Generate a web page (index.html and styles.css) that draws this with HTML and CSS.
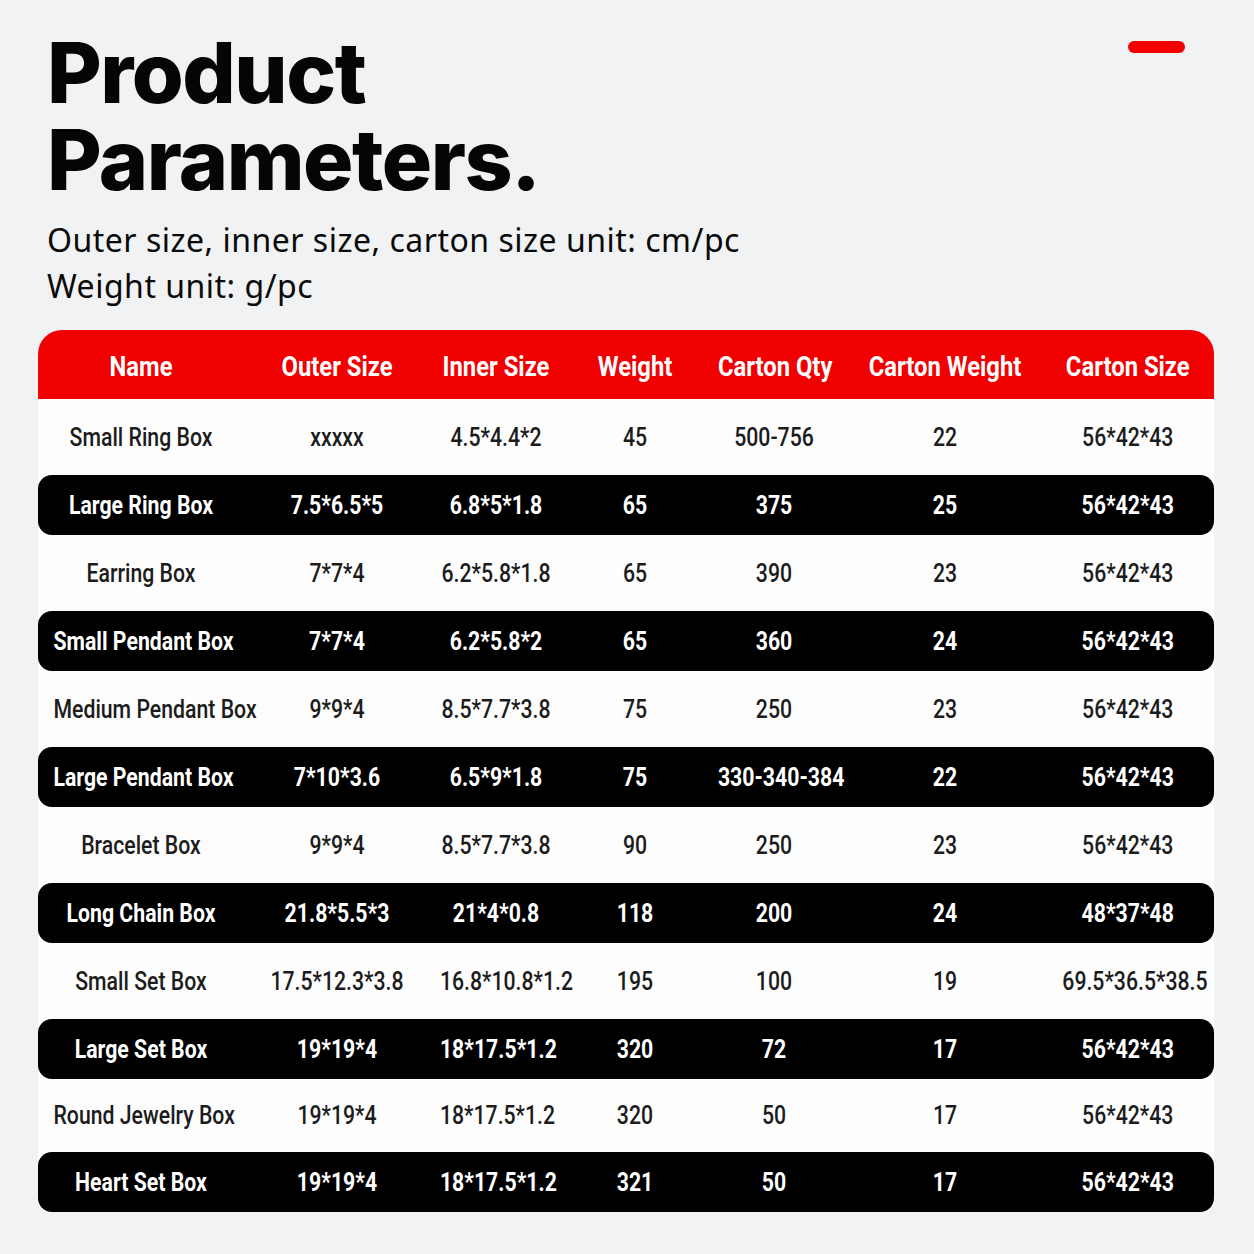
FILE: index.html
```html
<!DOCTYPE html>
<html lang="en">
<head>
<meta charset="utf-8">
<title>Product Parameters</title>
<link rel="stylesheet" href="styles.css">
</head>
<body>
<div class="page">
  <header class="intro">
    <div class="title-row">
      <h1 class="title">Product<br>Parameters.</h1>
      <span class="pill"></span>
    </div>
    <p class="sub">Outer size, inner size, carton size unit: cm/pc<br>Weight unit: g/pc</p>
  </header>

  <section class="table">
    <div class="row head">
      <span>Name</span><span>Outer Size</span><span>Inner Size</span><span>Weight</span><span>Carton Qty</span><span>Carton Weight</span><span>Carton Size</span>
    </div>
    <div class="row light">
      <span>Small Ring Box</span><span>xxxxx</span><span>4.5*4.4*2</span><span>45</span><span>500-756</span><span>22</span><span>56*42*43</span>
    </div>
    <div class="row dark">
      <span>Large Ring Box</span><span>7.5*6.5*5</span><span>6.8*5*1.8</span><span>65</span><span>375</span><span>25</span><span>56*42*43</span>
    </div>
    <div class="row light">
      <span>Earring Box</span><span>7*7*4</span><span>6.2*5.8*1.8</span><span>65</span><span>390</span><span>23</span><span>56*42*43</span>
    </div>
    <div class="row dark">
      <span>Small Pendant Box</span><span>7*7*4</span><span>6.2*5.8*2</span><span>65</span><span>360</span><span>24</span><span>56*42*43</span>
    </div>
    <div class="row light">
      <span>Medium Pendant Box</span><span>9*9*4</span><span>8.5*7.7*3.8</span><span>75</span><span>250</span><span>23</span><span>56*42*43</span>
    </div>
    <div class="row dark">
      <span>Large Pendant Box</span><span>7*10*3.6</span><span>6.5*9*1.8</span><span>75</span><span>330-340-384</span><span>22</span><span>56*42*43</span>
    </div>
    <div class="row light">
      <span>Bracelet Box</span><span>9*9*4</span><span>8.5*7.7*3.8</span><span>90</span><span>250</span><span>23</span><span>56*42*43</span>
    </div>
    <div class="row dark">
      <span>Long Chain Box</span><span>21.8*5.5*3</span><span>21*4*0.8</span><span>118</span><span>200</span><span>24</span><span>48*37*48</span>
    </div>
    <div class="row light">
      <span>Small Set Box</span><span>17.5*12.3*3.8</span><span>16.8*10.8*1.2</span><span>195</span><span>100</span><span>19</span><span>69.5*36.5*38.5</span>
    </div>
    <div class="row dark">
      <span>Large Set Box</span><span>19*19*4</span><span>18*17.5*1.2</span><span>320</span><span>72</span><span>17</span><span>56*42*43</span>
    </div>
    <div class="row light short">
      <span>Round Jewelry Box</span><span>19*19*4</span><span>18*17.5*1.2</span><span>320</span><span>50</span><span>17</span><span>56*42*43</span>
    </div>
    <div class="row dark">
      <span>Heart Set Box</span><span>19*19*4</span><span>18*17.5*1.2</span><span>321</span><span>50</span><span>17</span><span>56*42*43</span>
    </div>
  </section>
</div>
</body>
</html>
```

FILE: styles.css
```css
* { box-sizing: border-box; }

html, body {
  margin: 0;
  padding: 0;
  background: #f1f2f3;
}

.page {
  width: 1254px;
  height: 1254px;
  padding: 29px 40px 0 38px;
}

.intro {
  padding-left: 9px;
}

.title-row {
  display: flex;
  justify-content: space-between;
  align-items: flex-start;
}

.title {
  margin: 0;
  font-family: "Inter", "Liberation Sans", sans-serif;
  font-weight: 800;
  font-size: 84px;
  line-height: 87px;
  letter-spacing: -1.5px;
  color: #050505;
}

.pill {
  display: block;
  width: 57px;
  height: 12px;
  margin-top: 12px;
  margin-right: 29px;
  border-radius: 6px;
  background: #f20000;
}

.sub {
  margin: 14px 0 0;
  font-family: "Noto Sans", "Liberation Sans", sans-serif;
  font-size: 32px;
  line-height: 46px;
  letter-spacing: 0.5px;
  color: #0a0a0a;
}

.table {
  margin-top: 21px;
  width: 1176px;
  background: #fdfdfd;
  border-radius: 24px 24px 10px 10px;
}

.row {
  display: grid;
  grid-template-columns: 206px 186px 132px 146px 132px 210px 164px;
  align-items: center;
  font-family: "Roboto", "Liberation Sans", sans-serif;
  text-align: center;
}

.row span {
  display: block;
  white-space: nowrap;
  transform: scaleX(0.85);
}

.row span:last-child {
  padding-right: 10px;
}

.head {
  height: 69px;
  background: #f00000;
  color: #fff;
  font-weight: 700;
  font-size: 28px;
  border-radius: 24px 24px 0 0;
  padding-top: 3px;
}

.light {
  height: 76px;
  color: #1c1c1c;
  font-weight: 500;
  font-size: 25px;
}

.light.short {
  height: 73px;
}

.dark {
  height: 60px;
  background: #000;
  color: #fff;
  font-weight: 700;
  font-size: 25px;
  border-radius: 14px;
}
```
